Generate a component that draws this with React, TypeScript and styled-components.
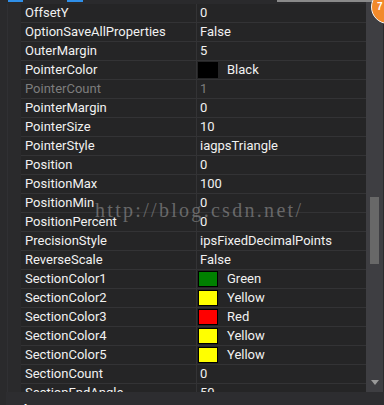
import React from "react";
import styled, { createGlobalStyle } from "styled-components";

const Global = createGlobalStyle`
  html, body { margin: 0; padding: 0; background: #252526; }
  body { font-family: Roboto, "Noto Sans", sans-serif; }
`;

const Frame = styled.div`
  position: relative;
  width: 384px;
  height: 405px;
  overflow: hidden;
  background: #2a2a2c;
  display: flex;
  flex-direction: column;
`;

const Main = styled.div`
  display: flex;
  height: 392px;
  flex: none;
`;

const GridArea = styled.div`
  flex: 1;
  display: flex;
  flex-direction: column;
  overflow: hidden;
`;

const TopStrip = styled.div`
  height: 4px;
  flex: none;
  display: flex;
`;

const Tab = styled.div<{ $left: number; $w: number }>`
  margin-left: ${(p) => p.$left}px;
  width: ${(p) => p.$w}px;
  height: 2px;
  background: #2f8fe8;
`;

const Body = styled.div`
  display: flex;
  flex: 1;
  overflow: hidden;
`;

const Gutter = styled.div`
  width: 21px;
  flex: none;
  display: flex;
`;

const GutterLine = styled.div`
  margin-left: 7px;
  width: 1px;
  background: #303033;
`;

const Rows = styled.div`
  flex: 1;
  display: flex;
  flex-direction: column;
`;

const Row = styled.div<{ $disabled?: boolean }>`
  display: grid;
  grid-template-columns: 175px 1px 1fr;
  height: 18px;
  flex: none;
  border-bottom: 1px solid #333335;
  background: #252526;
  color: ${(p) => (p.$disabled ? "#7d7d7d" : "#f1f1f1")};
  font-size: 13px;
  line-height: 18px;
`;

const NameCell = styled.div`
  padding-left: 4px;
  white-space: nowrap;
  overflow: hidden;
`;

const Divider = styled.div`
  background: #333335;
`;

const ValueCell = styled.div`
  padding-left: 3px;
  display: flex;
  align-items: center;
  white-space: nowrap;
`;

const Swatch = styled.span<{ $c: string }>`
  width: 18px;
  height: 14px;
  border: 1px solid #000;
  background: ${(p) => p.$c};
  margin-left: -2px;
  margin-right: 9px;
  flex: none;
`;

const Scrollbar = styled.div`
  width: 17px;
  flex: none;
  background: #3e3e42;
  border-right: 1px solid #2a2a2c;
  display: flex;
  flex-direction: column;
  align-items: center;
`;

const Thumb = styled.div`
  margin-top: 197px;
  width: 9px;
  height: 67px;
  background: #686868;
`;

const DownArrow = styled.div`
  margin-top: auto;
  margin-bottom: 7px;
  width: 0;
  height: 0;
  border-left: 4px solid transparent;
  border-right: 4px solid transparent;
  border-top: 5px solid #9a9a9a;
`;

const Bottom = styled.div`
  flex: 1;
  margin-left: 6px;
  background: #2d2d30;
  color: #ffffff;
  font-weight: 700;
  font-size: 13.5px;
  padding-left: 6px;
  line-height: 14px;
  padding-top: 10px;
  overflow: hidden;
  white-space: nowrap;
`;

const Watermark = styled.div`
  position: absolute;
  left: 95px;
  top: 199px;
  font-family: "Liberation Serif", "DejaVu Serif", serif;
  font-size: 20px;
  letter-spacing: 2.3px;
  color: rgba(170, 170, 170, 0.5);
  pointer-events: none;
  white-space: nowrap;
`;

const EdgeLine = styled.div`
  position: absolute;
  left: 277px;
  top: 0;
  width: 96px;
  height: 2px;
  background: #8a8a8a;
`;

const Badge = styled.div`
  position: absolute;
  left: 371px;
  top: -10px;
  width: 34px;
  height: 34px;
  border-radius: 50%;
  background: #f28a2a;
  border: 1.5px solid #f4f4f4;
  box-sizing: border-box;
  color: #fff;
  font-family: "Liberation Sans", sans-serif;
  font-weight: 700;
  font-size: 10px;
  padding: 10px 0 0 5px;
`;

type Item = { name: string; value: string; color?: string; disabled?: boolean };

const items: Item[] = [
  { name: "OffsetY", value: "0" },
  { name: "OptionSaveAllProperties", value: "False" },
  { name: "OuterMargin", value: "5" },
  { name: "PointerColor", value: "Black", color: "#000000" },
  { name: "PointerCount", value: "1", disabled: true },
  { name: "PointerMargin", value: "0" },
  { name: "PointerSize", value: "10" },
  { name: "PointerStyle", value: "iagpsTriangle" },
  { name: "Position", value: "0" },
  { name: "PositionMax", value: "100" },
  { name: "PositionMin", value: "0" },
  { name: "PositionPercent", value: "0" },
  { name: "PrecisionStyle", value: "ipsFixedDecimalPoints" },
  { name: "ReverseScale", value: "False" },
  { name: "SectionColor1", value: "Green", color: "#008000" },
  { name: "SectionColor2", value: "Yellow", color: "#ffff00" },
  { name: "SectionColor3", value: "Red", color: "#ff0000" },
  { name: "SectionColor4", value: "Yellow", color: "#ffff00" },
  { name: "SectionColor5", value: "Yellow", color: "#ffff00" },
  { name: "SectionCount", value: "0" },
  { name: "SectionEndAngle", value: "50" },
];

export default function App() {
  return (
    <>
      <Global />
      <Frame>
        <Main>
          <GridArea>
            <TopStrip>
              <Tab $left={8} $w={15} />
              <Tab $left={44} $w={16} />
            </TopStrip>
            <Body>
              <Gutter>
                <GutterLine />
              </Gutter>
              <Rows>
                {items.map((it) => (
                  <Row key={it.name} $disabled={it.disabled}>
                    <NameCell>{it.name}</NameCell>
                    <Divider />
                    <ValueCell>
                      {it.color && <Swatch $c={it.color} />}
                      {it.value}
                    </ValueCell>
                  </Row>
                ))}
              </Rows>
            </Body>
          </GridArea>
          <Scrollbar>
            <Thumb />
            <DownArrow />
          </Scrollbar>
        </Main>
        <Bottom>MinMaxUserCanMove</Bottom>
        <Watermark>http://blog.csdn.net/</Watermark>
        <EdgeLine />
        <Badge>7</Badge>
      </Frame>
    </>
  );
}
